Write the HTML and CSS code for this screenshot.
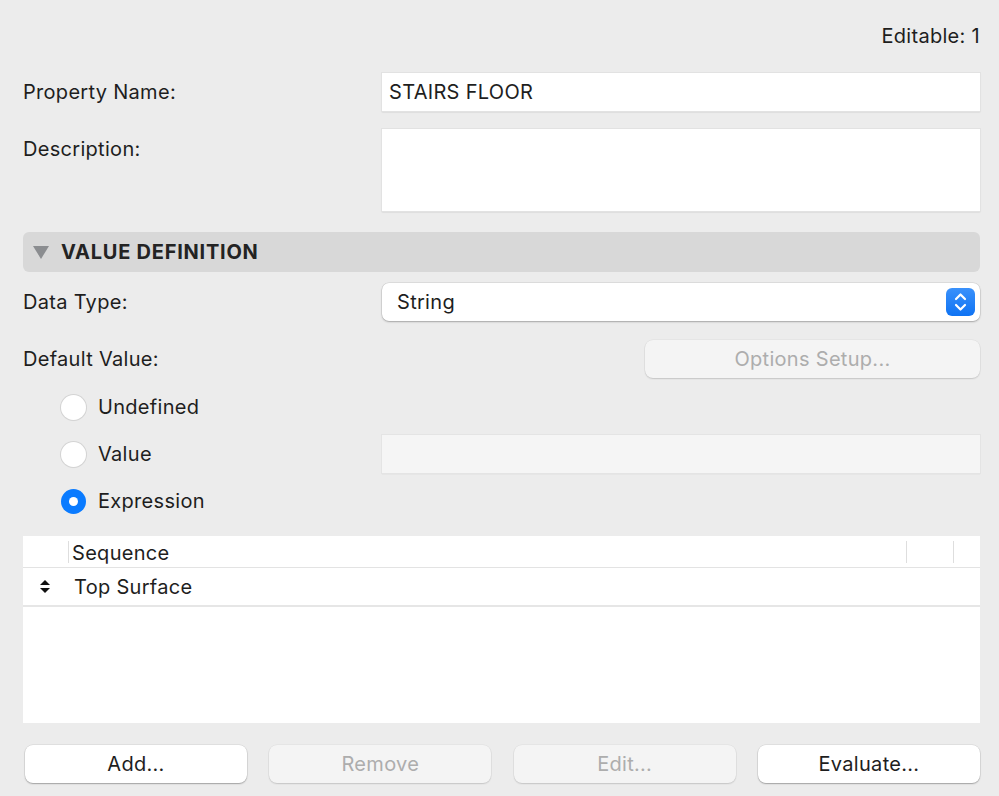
FILE: index.html
```html
<!DOCTYPE html>
<html>
<head>
<meta charset="utf-8">
<link rel="stylesheet" href="styles.css">
</head>
<body>
<div class="panel">
  <div class="editable">Editable: 1</div>

  <div class="row row-prop">
    <div class="label">Property Name:</div>
    <div class="field">STAIRS FLOOR</div>
  </div>

  <div class="row row-desc">
    <div class="label label-top">Description:</div>
    <div class="field area"></div>
  </div>

  <div class="section">
    <span class="tri"></span>
    <span class="section-title">VALUE DEFINITION</span>
  </div>

  <div class="row row-type">
    <div class="label">Data Type:</div>
    <div class="select">
      <span>String</span>
      <span class="stepper">
        <svg width="29" height="28" viewBox="0 0 29 28">
          <path d="M10 11 L14.5 6.5 L19 11" fill="none" stroke="#fff" stroke-width="2.2" stroke-linecap="round" stroke-linejoin="round"/>
          <path d="M10 17 L14.5 21.5 L19 17" fill="none" stroke="#fff" stroke-width="2.2" stroke-linecap="round" stroke-linejoin="round"/>
        </svg>
      </span>
    </div>
  </div>

  <div class="row row-default">
    <div class="label">Default Value:</div>
    <div class="right-end">
      <div class="btn disabled options">Options Setup...</div>
    </div>
  </div>

  <div class="radios">
    <div class="row radio-row">
      <label class="radio"><span class="dot"></span>Undefined</label>
      <div></div>
    </div>
    <div class="row radio-row">
      <label class="radio"><span class="dot"></span>Value</label>
      <div class="field disabled-field"></div>
    </div>
    <div class="row radio-row">
      <label class="radio"><span class="dot on"></span>Expression</label>
      <div></div>
    </div>
  </div>

  <div class="table">
    <div class="thead">
      <div class="th-handle"></div>
      <div class="th th-seq">Sequence</div>
      <div class="th th-a"></div>
      <div class="th th-b"></div>
    </div>
    <div class="trow">
      <div class="sort">
        <svg width="12" height="15" viewBox="0 0 12 15">
          <path d="M1 6 L6 1 L11 6 Z" fill="#111"/>
          <path d="M1 9 L6 14 L11 9 Z" fill="#111"/>
        </svg>
      </div>
      <div class="cell">Top Surface</div>
    </div>
  </div>

  <div class="buttons">
    <div class="btn">Add...</div>
    <div class="btn disabled">Remove</div>
    <div class="btn disabled">Edit...</div>
    <div class="btn">Evaluate...</div>
  </div>
</div>
</body>
</html>
```

FILE: styles.css
```css
* { box-sizing: border-box; }
html, body { margin: 0; padding: 0; }
body {
  background: #ececec;
  font-family: Inter, "Liberation Sans", sans-serif;
  font-size: 20px;
  letter-spacing: 0.3px;
  color: #1e1e1e;
  width: 999px;
  height: 796px;
  overflow: hidden;
}
.panel {
  padding: 24px 19px 0 23px;
  display: flex;
  flex-direction: column;
}
.editable {
  text-align: right;
  line-height: 24px;
  height: 24px;
}
.row {
  display: grid;
  grid-template-columns: 358px 1fr;
  align-items: center;
}
.row-prop { margin-top: 25px; }
.row-desc { margin-top: 18px; align-items: start; }
.label { line-height: 24px; }
.label-top { padding-top: 8px; }
.field {
  height: 38px;
  background: #fff;
  box-shadow: 0 0 0 1px #e2e2e2, 0 1px 1.5px rgba(0,0,0,0.22);
  padding: 0 7px;
  line-height: 38px;
  margin-left: 1px;
}
.area { height: 82px; }
.section {
  margin-top: 21px;
  height: 40px;
  background: #d8d8d8;
  border-radius: 6px;
  display: flex;
  align-items: center;
  padding-left: 10px;
}
.tri {
  width: 0; height: 0;
  border-left: 8px solid transparent;
  border-right: 8px solid transparent;
  border-top: 13px solid #8b8d90;
  margin-right: 12px;
}
.section-title {
  font-weight: 700;
  letter-spacing: 0.75px;
  color: #232323;
}
.row-type { margin-top: 11px; }
.select {
  margin-left: 1px;
  height: 38px;
  background: #fff;
  border-radius: 7px;
  box-shadow: 0 0 0 0.5px rgba(0,0,0,0.12), 0 1px 2px rgba(0,0,0,0.25);
  display: flex;
  align-items: center;
  justify-content: space-between;
  padding: 0 5px 0 15px;
}
.stepper {
  width: 29px; height: 28px;
  border-radius: 6px;
  background: linear-gradient(#3a91fb, #0f73f3);
  display: flex;
}
.row-default { margin-top: 19px; }
.right-end { display: flex; justify-content: flex-end; }
.btn {
  height: 38px;
  line-height: 38px;
  text-align: center;
  background: #fff;
  border-radius: 8px;
  box-shadow: 0 0 0 0.5px rgba(0,0,0,0.1), 0 1px 1.5px rgba(0,0,0,0.28);
  color: #1e1e1e;
}
.btn.disabled {
  background: #f4f4f4;
  color: #adadad;
  box-shadow: 0 0 0 0.5px rgba(0,0,0,0.06), 0 1px 1.5px rgba(0,0,0,0.14);
}
.options { width: 335px; }
.radios {
  margin-top: 10px;
  display: flex;
  flex-direction: column;
  gap: 9px;
}
.radio-row { height: 38px; }
.radio {
  display: flex;
  align-items: center;
  padding-left: 38px;
}
.dot {
  width: 25px; height: 25px;
  border-radius: 50%;
  background: #fff;
  box-shadow: 0 0 0 1px #d4d4d4, 0 0.5px 1px rgba(0,0,0,0.1);
  margin-right: 12px;
  display: flex;
  align-items: center;
  justify-content: center;
}
.dot.on {
  background: #0a7bff;
  box-shadow: none;
}
.dot.on::after {
  content: "";
  width: 9px; height: 9px;
  border-radius: 50%;
  background: #fff;
}
.disabled-field {
  background: #f5f5f5;
  box-shadow: 0 0 0 1px #e4e4e4, 0 1px 1px rgba(0,0,0,0.14);
}
.table {
  margin-top: 16px;
  height: 187px;
  background: #fff;
}
.thead {
  height: 32px;
  display: flex;
  align-items: center;
  border-bottom: 1px solid #e3e3e3;
}
.th-handle { width: 45px; }
.th { height: 22px; line-height: 24px; border-left: 1px solid #dedede; }
.th-seq { flex: 1; padding-left: 3px; }
.th-a { width: 47px; }
.th-b { width: 27px; }
.trow {
  height: 39px;
  display: flex;
  align-items: center;
  border-bottom: 2px solid #e6e6e6;
}
.sort { width: 51px; padding-left: 16px; display: flex; }
.buttons {
  margin-top: 22px;
  display: grid;
  grid-template-columns: repeat(4, 222px);
  justify-content: space-between;
  padding-left: 2px;
}
```
